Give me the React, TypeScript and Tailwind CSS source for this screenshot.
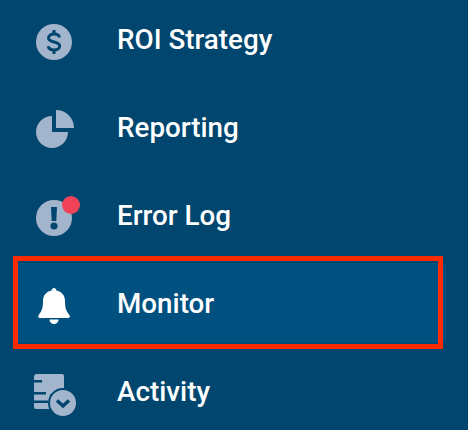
import type { ReactNode } from "react";

const iconColor = "#a3b5cc";
const bg = "#00466e";

function DollarIcon() {
  return (
    <svg width="36" height="36" viewBox="0 0 36 36">
      <circle cx="18" cy="18" r="18" fill={iconColor} />
      <path
        d="M23.500 13.500c-.3-2-2.500-3.500-5.500-3.500-3.200 0-5.500 1.600-5.500 4 0 5.200 11.200 2.800 11.200 8 0 2.500-2.500 4-5.700 4-3 0-5.400-1.500-5.800-3.700"
        fill="none"
        stroke={bg}
        strokeWidth="3"
      />
      <path d="M18 6v5M18 25v5" stroke={bg} strokeWidth="3" />
    </svg>
  );
}

function PieIcon() {
  return (
    <svg width="38" height="38" viewBox="0 0 38 38">
      <path d="M20 0a18 18 0 0 1 18 18H20z" fill={iconColor} />
      <path d="M16 6a16 16 0 1 0 16 16H16z" fill={iconColor} />
    </svg>
  );
}

function ErrorIcon() {
  return (
    <svg width="36" height="36" viewBox="0 0 36 36">
      <circle cx="18" cy="18" r="18" fill={iconColor} />
      <path d="M15 7h6l-.7 14h-4.600z" fill={bg} />
      <circle cx="18" cy="26" r="3.500" fill={bg} />
    </svg>
  );
}

function BellIcon() {
  return (
    <svg width="32" height="36" viewBox="0 0 32 36">
      <path
        d="M16 0c1.300 0 2.300 1 2.300 2.400C24 3.500 27 7.500 27 13c0 7.500 1.300 10 4.300 14 .9 1 .5 3-1 3H1.700c-1.500 0-1.900-2-1-3C3.700 23 5 20.500 5 13 5 7.500 8 3.500 13.700 2.400 13.700 1 14.700 0 16 0z"
        fill="#fff"
      />
      <path d="M11.500 31.500h9c0 2.800-2 4.500-4.500 4.500s-4.500-1.700-4.500-4.500z" fill="#fff" />
    </svg>
  );
}

function ActivityIcon() {
  return (
    <svg width="42" height="42" viewBox="0 0 42 42">
      <path d="M3 0h25a2 2 0 0 1 2 2v33H2a2 2 0 0 1-2-2V3a3 3 0 0 1 3-3z" fill={iconColor} />
      <path d="M0 6h8v2.500H0zM0 18h12v2.500H0zM0 26.500h14V29H0z" fill={bg} />
      <path d="M16 20h14v22H16z" fill={bg} />
      <circle cx="29" cy="29" r="15" fill={bg} />
      <circle cx="29" cy="29" r="13" fill={iconColor} />
      <path d="M23 26.500l6 5.500 6-5.500" fill="none" stroke={bg} strokeWidth="3.500" />
    </svg>
  );
}

type Item = { label: string; icon: ReactNode; iconClass: string; active?: boolean; dot?: boolean };

const items: Item[] = [
  { label: "ROI Strategy", icon: <DollarIcon />, iconClass: "mt-[6px]" },
  { label: "Reporting", icon: <PieIcon />, iconClass: "mt-[4px] pl-[2px]" },
  { label: "Error Log", icon: <ErrorIcon />, iconClass: "mt-[6px]", dot: true },
  { label: "Monitor", icon: <BellIcon />, iconClass: "mt-[6px]", active: true },
  { label: "Activity", icon: <ActivityIcon />, iconClass: "mt-[8px] pl-[2px]" },
];

export default function App() {
  return (
    <div className="h-[430px] w-[468px] overflow-hidden bg-[#00466e] font-['Roboto',sans-serif]">
      <ul className="-mt-[1px] ml-[16px] flex w-[430px] flex-col gap-[8px]">
        {items.map((item) => (
          <li
            key={item.label}
            className={`relative flex h-[80px] shrink-0 items-center gap-[26px] rounded-[4px] ${item.active ? "bg-[#00517f]" : ""}`}
          >
            {item.active && (
              <div className="absolute -top-[7px] -bottom-[6px] -left-[3px] right-[3px] border-[5px] border-[#ff2a00]" />
            )}
            <div className={`flex w-[76px] shrink-0 justify-center ${item.iconClass}`}>
              <div className="relative flex">
                {item.icon}
                {item.dot && (
                  <span className="absolute left-[26px] -top-[4px] h-[18px] w-[18px] rounded-full bg-[#f04359]" />
                )}
              </div>
            </div>
            <span className="mt-[2px] -ml-[1px] text-[27.8px] font-medium text-white">{item.label}</span>
          </li>
        ))}
      </ul>
    </div>
  );
}
